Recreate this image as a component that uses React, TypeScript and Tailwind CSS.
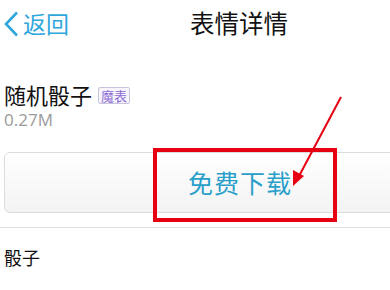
export default function App() {
  return (
    <div
      className="relative w-[390px] h-[290px] overflow-hidden bg-white text-[#111]"
      style={{ fontFamily: '"Noto Sans CJK SC", "Noto Sans", sans-serif' }}
    >
      {/* header */}
      <div className="flex items-center h-[46px]">
        <div className="flex items-center pl-[3px] text-[#2ea7dd]">
          <svg width="16" height="26" viewBox="0 0 16 26" className="mt-[2px]">
            <path d="M14 1.5 L3 13 L14 24.5" fill="none" stroke="currentColor" strokeWidth="2.6" />
          </svg>
          <span className="ml-[4px] text-[23px] leading-none">返回</span>
        </div>
        <span className="ml-[121px] text-[24.5px] leading-none">表情详情</span>
      </div>

      {/* info */}
      <div className="px-[4px] pt-[35px]">
        <div className="flex items-center gap-[6px]">
          <span className="text-[22px] leading-[26px]">随机骰子</span>
          <span className="mt-[2px] border border-[#c9c2dc] rounded-[2px] px-[2px] h-[17px] flex items-center text-[13px] leading-none text-[#8b6cd6] bg-[#f7f5fb]">
            魔表
          </span>
        </div>
        <div className="mt-[3px] text-[17px] leading-[20px] text-[#9a9a9a]" style={{ fontFamily: '"Open Sans", sans-serif' }}>
          0.27M
        </div>
      </div>

      {/* download button */}
      <div className="pl-[4px] pt-[22px]">
        <div className="w-[472px] h-[61px] rounded-[6px] border border-[#dcdcdc] bg-gradient-to-b from-white to-[#f3f3f3] flex items-center justify-center">
          <span className="text-[25px] leading-none text-[#2a9fc9] tracking-[1px]">免费下载</span>
        </div>
      </div>

      <div className="mt-[14px] h-px bg-[#dedede]" />

      <div className="px-[4px] pt-[18px] text-[18px] leading-[22px]">骰子</div>

      {/* annotations */}
      <div className="absolute left-[153px] top-[148px] w-[184px] h-[74px] border-4 border-[#e60012]" />
      <svg className="absolute left-0 top-0" width="390" height="290" viewBox="0 0 390 290">
        <line x1="341" y1="97" x2="298" y2="178" stroke="#e60012" strokeWidth="2" />
        <polygon points="293,186 293,170 304,176" fill="#e60012" />
      </svg>
    </div>
  );
}
